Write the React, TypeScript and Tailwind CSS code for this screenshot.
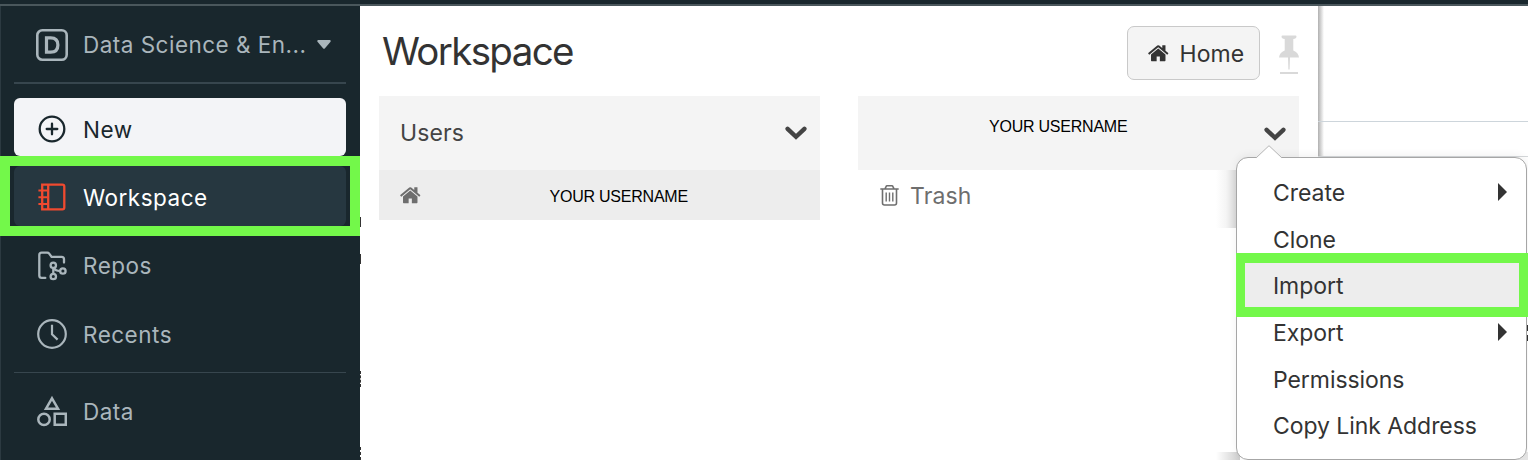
import React from "react";

type IconProps = { className?: string };

function HomeIcon({ className }: IconProps) {
  return (
    <svg viewBox="0 0 1792 1792" fill="currentColor" className={className}>
      <path d="M1472 992v480q0 26-19 45t-45 19h-384v-384h-256v384h-384q-26 0-45-19t-19-45v-480q0-1 .5-3t.5-3l575-474 575 474q1 2 1 6zm223-69l-62 74q-8 9-21 11h-3q-13 0-21-7l-692-577-692 577q-12 8-24 7-13-2-21-11l-62-74q-8-10-7-23.5t11-21.5l719-599q32-26 76-26t76 26l244 204v-195q0-14 9-23t23-9h192q14 0 23 9t9 23v408l219 182q10 8 11 21.5t-7 23.5z" />
    </svg>
  );
}

function ChevronIcon() {
  return (
    <svg viewBox="0 0 22 14" className="h-[14px] w-[22px] shrink-0 text-[#444]">
      <path d="M2.6 2.8 11 10.8l8.400-8" fill="none" stroke="currentColor" strokeWidth="4.400" strokeLinecap="round" />
    </svg>
  );
}

function PinIcon() {
  return (
    <svg viewBox="0 0 20 39" className="h-[39px] w-5 shrink-0 text-[#d9d9d9]">
      <path
        fill="currentColor"
        d="M3.500 0.500h13q1 0 1 1.200 0 1.800-3.200 2.300V15.500q5.200 2 5.700 7h-9l-.4 12h-1.200L9 22.500H0q.5-5 5.700-7V4Q2.500 3.500 2.500 1.700 2.500.5 3.500.5z"
      />
      <path fill="currentColor" d="M1 37h18v2H1z" />
    </svg>
  );
}

function TrashIcon() {
  return (
    <svg viewBox="0 0 19 21" fill="none" stroke="currentColor" className="h-[21px] w-[19px] shrink-0">
      <path strokeWidth="1.600" d="M.3 4h18.400M5 4l1-2.400q.3-.8 1.200-.8h4.600q.9 0 1.200.8L14 4M2.500 4v14q0 2 2 2h10q2 0 2-2V4" />
      <path strokeWidth="1.400" d="M6.200 7.500v9M9.500 7.500v9M12.800 7.500v9" />
    </svg>
  );
}

function SquareDIcon() {
  return (
    <svg viewBox="0 0 32 32" fill="none" stroke="currentColor" className="size-8">
      <rect x="1.300" y="1.300" width="29.400" height="29.400" rx="5" strokeWidth="2.600" />
      <path strokeWidth="3.200" d="M10.500 8.900h4.200q7.200 0 7.200 7.100t-7.200 7.100h-4.200z" />
    </svg>
  );
}

function PlusCircleIcon() {
  return (
    <svg viewBox="0 0 28 28" fill="none" stroke="currentColor" className="size-7">
      <circle cx="14" cy="14" r="12.300" strokeWidth="2.300" />
      <path strokeWidth="2.300" strokeLinecap="round" d="M14 8.700v10.600M8.700 14h10.600" />
    </svg>
  );
}

function NotebookIcon() {
  return (
    <svg viewBox="0 0 28 28" fill="none" stroke="currentColor" strokeWidth="2.300" className="size-7 text-[#f04a2f]">
      <path d="M4.200 1.600h20.200q1.900 0 1.900 1.900v21q0 1.900-1.900 1.900H4.200zM10.200 1.600v24.800" />
      <path strokeWidth="2" d="M.4 7.500h9M.4 14.300h9M.4 21h9" />
    </svg>
  );
}

function ReposIcon() {
  return (
    <svg viewBox="0 0 30 30" fill="none" stroke="currentColor" strokeWidth="2.300" className="size-[30px]">
      <path strokeLinecap="round" d="M8.300 26.900H4.700q-2.400 0-2.400-2.400V4.100q0-2.400 2.400-2.400h5.500q1.300 0 2 .9l2.400 3.300h10q2.400 0 2.400 2.400v3.300" />
      <circle cx="16.300" cy="14.300" r="2.700" />
      <circle cx="16.300" cy="25.500" r="2.700" />
      <circle cx="25.900" cy="20" r="2.700" />
      <path d="M16.300 17v6M16.800 16.800q1.500 3.200 6.400 3.200" />
    </svg>
  );
}

function ClockIcon() {
  return (
    <svg viewBox="0 0 30 30" fill="none" stroke="currentColor" strokeWidth="2.200" className="size-[30px]">
      <circle cx="15" cy="15" r="13.800" />
      <path d="M15 5.700v9.600l5.600 5.300" />
    </svg>
  );
}

function ShapesIcon() {
  return (
    <svg viewBox="0 0 30 32" fill="none" stroke="currentColor" strokeWidth="2.500" className="mb-[2px] h-8 w-[30px]">
      <path d="M15 3.300 21 13.700H9z" />
      <circle cx="7" cy="24.400" r="5.700" />
      <path d="M17.700 18.700h11.100v11.100H17.700z" />
    </svg>
  );
}

function NavRow({ icon, label, className, labelClass = "" }: { icon: React.ReactNode; label: string; className: string; labelClass?: string }) {
  return (
    <div className={`flex items-center ${className}`}>
      <span className="flex w-[76px] shrink-0 justify-center">{icon}</span>
      <span className={`-ml-[7px] text-[22.500px] tracking-[0.500px] whitespace-nowrap ${labelClass}`}>{label}</span>
    </div>
  );
}

function Sidebar() {
  return (
    <nav className="flex h-full w-[360px] shrink-0 flex-col border-l border-[#2c3a41] bg-[#19272d] text-[#aab6bc]">
      <div className="flex h-[76px] items-center pt-px pl-[35px]">
        <SquareDIcon />
        <span className="ml-[15px] w-[225px] text-[22.500px] tracking-[0.480px] whitespace-nowrap">Data Science &amp; En...</span>
        <svg viewBox="0 0 14 9" className="ml-[9px] h-[9px] w-[14px]">
          <path fill="currentColor" d="M1 0h12q1.200.7.500 1.700L8 8.300q-1 1-2 0L.5 1.700Q-.2.7 1 0z" />
        </svg>
      </div>
      <div className="mr-[14px] ml-[13px] h-[2px] shrink-0 bg-[#37464e]" />
      <div className="mt-[14px] mr-[14px] ml-[13px] h-[58px] shrink-0 overflow-hidden rounded-[6px] bg-[#f3f4f7] text-[#19272d]">
        <NavRow icon={<PlusCircleIcon />} label="New" className="h-[62px]" labelClass="pt-[2px]" />
      </div>
      <div className="-ml-px h-20 shrink-0 border-[10px] border-[#73f84a] px-1">
        <div className="h-[60px] rounded-[6px] bg-[#263740] text-white">
          <NavRow icon={<NotebookIcon />} label="Workspace" className="h-[62px]" labelClass="pt-[2px]" />
        </div>
      </div>
      <NavRow icon={<ReposIcon />} label="Repos" className="ml-[13px] h-[60px]" />
      <NavRow icon={<ClockIcon />} label="Recents" className="ml-[13px] h-[76px]" labelClass="pt-[2px]" />
      <div className="mr-[14px] ml-[13px] h-px shrink-0 bg-[#37464e]" />
      <NavRow icon={<ShapesIcon />} label="Data" className="ml-[13px] h-[77px]" />
    </nav>
  );
}

function Username() {
  return <span className="font-['Liberation_Sans',Arial,sans-serif] text-[16px] leading-5 tracking-[-0.230px] text-black">YOUR USERNAME</span>;
}

function Panel() {
  return (
    <main className="h-full w-[958px] shrink-0 bg-white pl-[19px]">
      <header className="flex h-[90px] items-start pr-[19px]">
        <h1 className="mt-[20px] ml-[3px] flex-1 text-[38.500px] leading-[50px] tracking-[-1.650px] text-[#333]">Workspace</h1>
        <button className="mt-[20px] flex h-[54px] w-[133px] items-center rounded-[7px] border border-[#c9c9c9] bg-[#f4f4f4] pl-[19px] text-[#333]">
          <HomeIcon className="size-[22.500px]" />
          <span className="ml-[10px] pt-[2px] text-[23px] tracking-[0.100px]">Home</span>
        </button>
        <div className="mt-[29px] ml-[19px]">
          <PinIcon />
        </div>
      </header>
      <div className="flex gap-[38px]">
        <section className="w-[441px]">
          <div className="flex h-[74px] items-center justify-between bg-[#f4f4f4] pr-[13px] pl-[21px] text-[23px] tracking-[0.100px] text-[#444]">
            <span>Users</span>
            <span><ChevronIcon /></span>
          </div>
          <div className="flex h-[50px] items-center bg-[#ededed] pl-[20px] text-[#6e6e6e]">
            <HomeIcon className="mr-[128px] size-[22.500px]" />
            <span className="pt-[2px]"><Username /></span>
          </div>
        </section>
        <section className="w-[441px]">
          <div className="flex h-[74px] items-start bg-[#f4f4f4] pt-[21px] pl-[131px]">
            <Username />
            <span className="mt-[10px] ml-auto pr-[13px]"><ChevronIcon /></span>
          </div>
          <div className="flex h-[50px] items-center gap-[11px] pl-[22px] text-[23px] tracking-[0.100px] text-[#6e6e6e]">
            <TrashIcon />
            <span className="pt-[2px]">Trash</span>
          </div>
        </section>
      </div>
    </main>
  );
}

const menuItems = [
  { label: "Create", submenu: true },
  { label: "Clone" },
  { label: "Import", active: true },
  { label: "Export", submenu: true },
  { label: "Permissions" },
  { label: "Copy Link Address" },
];

function ContextMenu() {
  return (
    <>
      <div className="absolute top-[170px] left-[1216px] h-[58px] w-[20px] bg-gradient-to-r from-transparent via-black/4 to-black/15" />
      <div className="absolute top-[452px] left-[1216px] h-[8px] w-[24px] bg-gradient-to-r from-transparent to-black/20" />
      <div className="absolute top-[452px] left-[1516px] h-[8px] w-[12px] bg-black/10" />
      <div className="absolute top-[157px] left-[1236px] h-[303px] w-[291px] rounded-[12px] border border-[#a6a6a6] bg-white pt-[12px] text-[#333] shadow-[0_-2px_8px_rgba(0,0,0,0.06)]">
        {menuItems.map((item) => (
          <div
            key={item.label}
            className={
              item.active
                ? "relative -mt-[10px] -mr-[2px] -mb-[7px] -ml-px flex h-[64px] items-center border-y-[10px] border-r-[9px] border-l-[9px] border-[#73f84a] bg-[#ededed] pt-[2px] pl-[28px]"
                : "flex h-[46.500px] items-center pl-[36px]"
            }
          >
            <span className="text-[23px] tracking-[-0.060px] whitespace-nowrap">{item.label}</span>
            {item.submenu && (
              <svg viewBox="0 0 9 18" className="mr-[19px] mb-[2px] ml-auto h-[18px] w-[9px]">
                <path d="M0 0 9 9 0 18z" fill="currentColor" />
              </svg>
            )}
          </div>
        ))}
      </div>
      <svg viewBox="0 0 28 14" className="absolute top-[145px] left-[1255px] h-[14px] w-[28px]">
        <path d="M0 14 L1 13 14 .7 27 13 28 14z" fill="white" />
        <path d="M1 13 14 .7 27 13" fill="none" stroke="#b5b5b5" />
      </svg>
    </>
  );
}

export default function App() {
  return (
    <div className="relative flex h-[460px] w-[1528px] flex-col overflow-hidden bg-white font-[Inter,'Liberation_Sans',sans-serif]">
      <div className="h-[6px] shrink-0 border-b-2 border-[#4a575c] bg-[#19272d]" />
      <div className="flex h-[454px]">
        <Sidebar />
        <Panel />
        <aside className="flex flex-1 flex-col">
          <div className="h-[151px] shrink-0 border-b border-[#d5d8da] bg-gradient-to-r from-[#b0b0b0] to-white to-[6px]">
            <div className="h-[116px] border-b border-[#cdd5db]" />
          </div>
        </aside>
      </div>
      <div className="absolute top-[217px] left-[360px] h-[10px] w-px bg-[#333]" />
      <div className="absolute top-[254px] left-[360px] h-[10px] w-px bg-[#333]" />
      <div className="absolute top-[371px] left-[360px] h-[16px] border-l border-dashed border-[#333]" />
      <div className="absolute top-[447px] left-[360px] h-[13px] border-l border-dashed border-[#333]" />
      <div className="absolute top-[325px] left-[1526px] h-[16px] border-l-2 border-dashed border-[#333]" />
      <ContextMenu />
    </div>
  );
}
